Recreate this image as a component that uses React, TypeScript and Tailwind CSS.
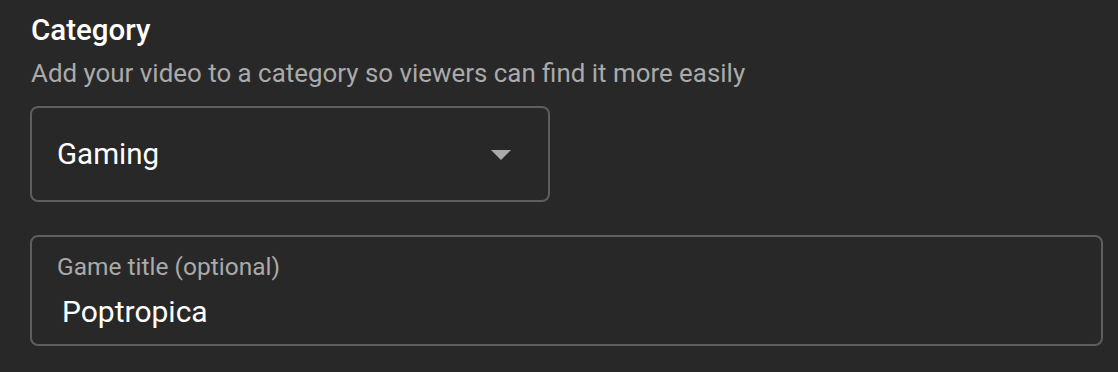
export default function App() {
  return (
    <div className="w-[1118px] h-[372px] bg-[#282828] pl-[30px] pt-[12px] overflow-hidden" style={{ fontFamily: 'Roboto, "Noto Sans", sans-serif' }}>
      <div className="text-[29.5px] leading-[36px] font-medium text-white pl-[1px]">Category</div>
      <div className="mt-[9px] text-[25.9px] leading-[32px] text-[#aaaaaa] pl-[1px]">Add your video to a category so viewers can find it more easily</div>
      <div className="mt-[17px] w-[520px] h-[96px] border-2 border-[#5e5e5e] rounded-[8px] flex items-center justify-between pl-[25px] pr-[37px]">
        <span className="text-[29.5px] text-white">Gaming</span>
        <svg width="20" height="10" viewBox="0 0 20 10" className="mt-[2px]"><path d="M0 0 L20 0 L10 10 Z" fill="#aaaaaa" /></svg>
      </div>
      <div className="mt-[33px] w-[1073px] h-[111px] border-2 border-[#5e5e5e] rounded-[8px] pl-[25px] pt-[16px]">
        <div className="text-[24.5px] leading-[28px] text-[#aaaaaa]">Game title (optional)</div>
        <div className="text-[30px] leading-[36px] text-white pl-[5px] mt-[13px]">Poptropica</div>
      </div>
    </div>
  );
}
